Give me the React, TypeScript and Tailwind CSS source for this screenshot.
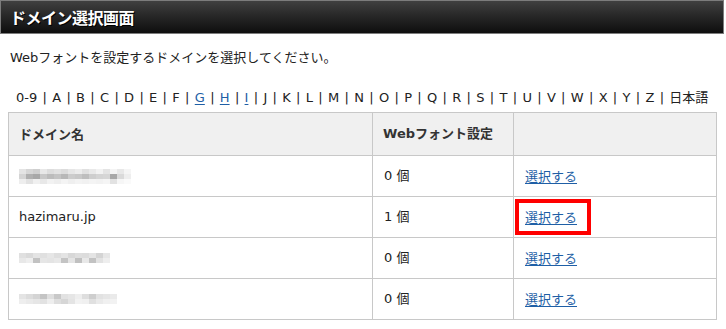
const font = `font-["DejaVu_Sans","Noto_Sans_CJK_JP",sans-serif]`
const cjk = `font-["Noto_Sans_CJK_JP",sans-serif]`

const letters = ["0-9", "A", "B", "C", "D", "E", "F", "G", "H", "I", "J", "K", "L", "M", "N", "O", "P", "Q", "R", "S", "T", "U", "V", "W", "X", "Y", "Z", "日本語"]
const linked = ["G", "H", "I"]

// mosaic rows standing in for the blurred-out domain names
const mosaics: Record<string, string[][]> = {
  a: [
    ["#e4e4e4", "#d6d6d6", "#cfcfcf", "#e8e8e8", "#dddddd", "#e2e2e2", "#dcdcdc", "#e6e6e6", "#ececec", "#e0e0e0", "#e9e9e9", "#f2f2f2", "#e4e4e4", "#f4f4f4", "#e8e8e8", "#f5f5f5"],
    ["#d4d4d4", "#b0b0b0", "#a8a8a8", "#c8c8c8", "#bcbcbc", "#c4c4c4", "#b8b8b8", "#cccccc", "#c8c8c8", "#bebebe", "#cecece", "#d4d4d4", "#d6d6d6", "#a8a8a8", "#dadada", "#eeeeee"],
    ["#eeeeee", "#e2e2e2", "#f0f0f0", "#e8e8e8", "#f2f2f2", "#eeeeee", "#f4f4f4", "#efefef", "#f3f3f3", "#f1f1f1", "#f4f4f4", "#f2f2f2", "#f5f5f5", "#e2e2e2", "#f6f6f6", "#fafafa"],
  ],
  b: [
    ["#e0e0e0", "#dadada", "#e4e4e4", "#e0e0e0", "#e6e6e6", "#dedede", "#e4e4e4", "#d8d8d8", "#dedede", "#dcdcdc", "#e4e4e4", "#d4d4d4", "#e6e6e6"],
    ["#e8e8e8", "#eeeeee", "#c2c2c2", "#e6e6e6", "#e4e4e4", "#e8e8e8", "#c4c4c4", "#e4e4e4", "#c0c0c0", "#e8e8e8", "#c2c2c2", "#e2e2e2", "#eeeeee"],
  ],
  c: [
    ["#e4e4e4", "#dcdcdc", "#d4d4d4", "#c4c4c4", "#dedede", "#c8c8c8", "#e2e2e2", "#e6e6e6", "#eeeeee", "#dedede", "#cecece", "#e2e2e2", "#e6e6e6", "#eaeaea"],
    ["#eeeeee", "#eaeaea", "#e6e6e6", "#e2e2e2", "#eeeeee", "#dedede", "#d6d6d6", "#e4e4e4", "#f2f2f2", "#f0f0f0", "#e0e0e0", "#eaeaea", "#f0f0f0", "#f2f2f2"],
  ],
}

function Mosaic({ rows }: { rows: string[][] }) {
  return (
    <div className="flex flex-col blur-[0.6px]">
      {rows.map((row, i) => (
        <div key={i} className="flex">
          {row.map((c, j) => (
            <span key={j} className="h-[5px] w-[7px]" style={{ background: c }} />
          ))}
        </div>
      ))}
    </div>
  )
}

const rows = [
  { domain: <Mosaic rows={mosaics.a} />, count: "0 個", mark: false },
  { domain: "hazimaru.jp", count: "1 個", mark: true },
  { domain: <Mosaic rows={mosaics.b} />, count: "0 個", mark: false },
  { domain: <Mosaic rows={mosaics.c} />, count: "0 個", mark: false },
]

export default function App() {
  return (
    <div className={`h-[329px] w-[726px] bg-white text-[13px] text-[#222] ${font}`}>
      <div className="flex h-[34px] w-[724px] items-center border border-[#7c7c7c] bg-gradient-to-b from-[#404040] to-[#0e0e0e] pl-[9px]">
        <h1 className={`text-[16px] font-bold tracking-[-0.5px] text-white [text-shadow:1px_1px_0_#000] ${cjk}`}>ドメイン選択画面</h1>
      </div>

      <p className="mt-[15px] pl-[10px] leading-[18px]">Webフォントを設定するドメインを選択してください。</p>

      <div className="mt-[22px] flex items-center pl-[16px] leading-[18px]">
        {letters.map((l, i) => (
          <span key={l} className="flex items-center">
            {linked.includes(l) ? (
              <a href="#" className="text-[#1f5fa6] underline underline-offset-2">{l}</a>
            ) : (
              <span>{l}</span>
            )}
            {i < letters.length - 1 && <span className="px-[5.3px]">|</span>}
          </span>
        ))}
      </div>

      <table className="ml-[8px] mt-[5px] w-[708px] table-fixed border-collapse">
        <colgroup>
          <col className="w-[364px]" />
          <col className="w-[141px]" />
          <col className="w-[203px]" />
        </colgroup>
        <thead>
          <tr className="h-[43px] bg-[#f0f0f0] text-left text-[#333]">
            <th className={`border border-[#c8c8c8] pl-[10px] font-bold ${cjk}`}>ドメイン名</th>
            <th className="border border-[#c8c8c8] pl-[10px] font-bold">Webフォント設定</th>
            <th className="border border-[#c8c8c8]"></th>
          </tr>
        </thead>
        <tbody>
          {rows.map((r, i) => (
            <tr key={i} className="h-[41px]">
              <td className="border border-[#c8c8c8] pl-[10px]">{r.domain}</td>
              <td className="border border-[#c8c8c8] pl-[11px]">{r.count}</td>
              <td className="border border-[#c8c8c8] pl-0">
                <span className={`ml-[1px] inline-block py-[4px] pl-[6px] pr-[10px] ${r.mark ? "border-[4px] border-[#ff0000]" : "border-[4px] border-transparent"}`}>
                  <a href="#" className={`text-[#1f5fa6] underline underline-offset-2 ${cjk}`}>選択する</a>
                </span>
              </td>
            </tr>
          ))}
        </tbody>
      </table>
    </div>
  )
}
